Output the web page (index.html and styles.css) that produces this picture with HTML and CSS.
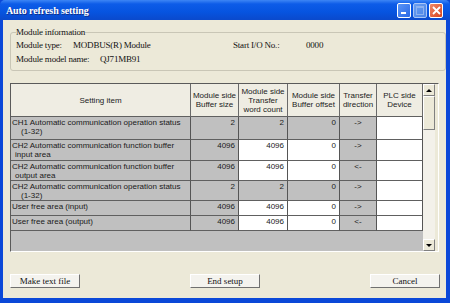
FILE: index.html
```html
<!DOCTYPE html>
<html lang="en">
<head>
    <meta charset="UTF-8">
    <title>Auto refresh setting</title>
    <link rel="stylesheet" href="styles.css">
</head>
<body>
    <div class="window">
        <div class="titlebar">
            <span class="title">Auto refresh setting</span>
            <div class="caption-btns">
                <span class="cbtn min"><span class="bar"></span></span>
                <span class="cbtn max"><span class="box"></span></span>
                <span class="cbtn close">
                    <svg width="9" height="9" viewBox="0 0 9 9"><path d="M1 1 L8 8 M8 1 L1 8" stroke="#fff" stroke-width="1.8"/></svg>
                </span>
            </div>
        </div>
        <div class="frame">
            <fieldset class="group">
                <legend>Module information</legend>
                <div class="info-row">
                    <span class="k1">Module type:</span>
                    <span class="v1">MODBUS(R) Module</span>
                    <span class="k2">Start I/O No.:</span>
                    <span>0000</span>
                </div>
                <div class="info-row">
                    <span class="k3">Module model name:</span>
                    <span>QJ71MB91</span>
                </div>
            </fieldset>

            <div class="grid-box">
                <div class="grid-main">
                    <div class="grid">
                        <div class="hd">Setting item</div>
                        <div class="hd">Module side<br>Buffer size</div>
                        <div class="hd">Module side<br>Transfer<br>word count</div>
                        <div class="hd">Module side<br>Buffer offset</div>
                        <div class="hd">Transfer<br>direction</div>
                        <div class="hd">PLC side<br>Device</div>

                        <div class="c g item">CH1 Automatic communication operation status<span class="l2 in1">(1-32)</span></div>
                        <div class="c g num">2</div>
                        <div class="c g num">2</div>
                        <div class="c g num">0</div>
                        <div class="c g dir">-&gt;</div>
                        <div class="c w"></div>

                        <div class="c g item">CH2 Automatic communication function buffer<span class="l2 in2">input area</span></div>
                        <div class="c g num">4096</div>
                        <div class="c w num">4096</div>
                        <div class="c w num">0</div>
                        <div class="c g dir">-&gt;</div>
                        <div class="c w"></div>

                        <div class="c g item">CH2 Automatic communication function buffer<span class="l2 in2">output area</span></div>
                        <div class="c g num">4096</div>
                        <div class="c w num">4096</div>
                        <div class="c w num">0</div>
                        <div class="c g dir">&lt;-</div>
                        <div class="c w"></div>

                        <div class="c g item">CH2 Automatic communication operation status<span class="l2 in1">(1-32)</span></div>
                        <div class="c g num">2</div>
                        <div class="c g num">2</div>
                        <div class="c g num">0</div>
                        <div class="c g dir">-&gt;</div>
                        <div class="c w"></div>

                        <div class="c g item">User free area (input)</div>
                        <div class="c g num">4096</div>
                        <div class="c w num">4096</div>
                        <div class="c w num">0</div>
                        <div class="c g dir">-&gt;</div>
                        <div class="c w"></div>

                        <div class="c g item">User free area (output)</div>
                        <div class="c g num">4096</div>
                        <div class="c w num">4096</div>
                        <div class="c w num">0</div>
                        <div class="c g dir">&lt;-</div>
                        <div class="c w"></div>
                    </div>
                    <div class="grid-fill"></div>
                </div>
                <div class="vscroll">
                    <div class="sbtn"><span class="tri up"></span></div>
                    <div class="track"><div class="thumb"></div></div>
                    <div class="sbtn"><span class="tri down"></span></div>
                </div>
            </div>

            <div class="buttons">
                <button class="btn">Make text file</button>
                <button class="btn">End setup</button>
                <button class="btn">Cancel</button>
            </div>
        </div>
    </div>
</body>
</html>
```

FILE: styles.css
```css
body {
    margin: 0;
    background: #fff;
}
.window {
    width: 450px;
    height: 303px;
    display: flex;
    flex-direction: column;
    background: #0b48d8;
    font-family: "Liberation Serif", serif;
    color: #111;
}
.titlebar {
    height: 20px;
    display: flex;
    align-items: center;
    padding: 0 7px 0 6px;
    background: linear-gradient(#3d86f5 0%, #0d5ce8 20%, #0654e0 60%, #0a49cc 100%);
    border-radius: 5px 5px 0 0;
}
.title {
    flex: 1;
    color: #fff;
    font-weight: bold;
    font-size: 10px;
    letter-spacing: -0.1px;
    text-shadow: 1px 1px #10308c;
}
.caption-btns {
    display: flex;
    gap: 2px;
    margin-top: 1px;
}
.cbtn {
    width: 14px;
    height: 15px;
    box-sizing: border-box;
    border: 1px solid #fff;
    border-radius: 2px;
    position: relative;
    display: flex;
    align-items: center;
    justify-content: center;
}
.cbtn.min {
    background: linear-gradient(135deg, #5a95f7, #2a68e6);
}
.cbtn.min .bar {
    position: absolute;
    left: 3px;
    bottom: 3px;
    width: 5px;
    height: 2px;
    background: #fff;
}
.cbtn.max {
    background: linear-gradient(135deg, #6a9ff2, #4b84e6);
    border-color: #a9c6f6;
}
.cbtn.max .box {
    width: 6px;
    height: 6px;
    border: 1px solid #8db2ef;
    border-top-width: 2px;
}
.cbtn.close {
    background: linear-gradient(135deg, #f08a6a, #d7441d);
}
.frame {
    flex: 1;
    margin: 0 4px 5px 3px;
    padding: 7px 0 0 7px;
    background: #ece9d8;
    display: flex;
    flex-direction: column;
}
.group {
    margin: 0;
    padding: 1px 5px 4px;
    border: 1px solid #c9c6b6;
    border-radius: 3px;
    font-size: 9px;
    letter-spacing: -0.2px;
}
.group legend {
    padding: 0;
    line-height: 10px;
}
.info-row {
    display: flex;
    line-height: 14px;
}
.k1 {
    width: 57px;
}
.v1 {
    width: 160px;
}
.k2 {
    width: 73px;
}
.k3 {
    width: 84px;
}
.grid-box {
    margin-top: 12px;
    margin-right: 7px;
    height: 169px;
    box-sizing: border-box;
    border: 1px solid;
    border-color: #5a5a5a #ffffff #ffffff #5a5a5a;
    display: flex;
    font-family: "Liberation Sans", Arial, sans-serif;
    font-size: 8px;
}
.grid-main {
    display: flex;
    flex-direction: column;
    background: #c0c0c0;
}
.grid {
    display: grid;
    grid-template-columns: 180px 48px 49px 52px 37px 46px;
    grid-template-rows: 33px 23px 21px 20px 20px 15px 15px;
}
.hd {
    background: #efede3;
    border-right: 1px solid #6a6a6a;
    border-bottom: 1px solid #606060;
    display: flex;
    align-items: center;
    justify-content: center;
    text-align: center;
    line-height: 9px;
    color: #222;
}
.c {
    box-sizing: border-box;
    border-right: 1px solid #555;
    border-bottom: 1px solid #606060;
    padding: 1px 2px 0;
    line-height: 9px;
    color: #1a1a1a;
    white-space: nowrap;
}
.g {
    background: #c0c0c0;
}
.w {
    background: #fff;
}
.item {
    padding-left: 1px;
}
.l2 {
    display: block;
}
.in1 {
    padding-left: 9px;
}
.in2 {
    padding-left: 3px;
}
.num {
    text-align: right;
    padding-right: 3px;
}
.dir {
    text-align: center;
}
.grid-fill {
    flex: 1;
    background: #c0c0c0;
}
.vscroll {
    width: 12px;
    display: flex;
    flex-direction: column;
    background: #f3f1ea;
}
.sbtn {
    height: 12px;
    box-sizing: border-box;
    background: #ece9d8;
    border: 1px solid;
    border-color: #fff #808080 #808080 #fff;
    display: flex;
    align-items: center;
    justify-content: center;
}
.tri {
    width: 0;
    height: 0;
    border-left: 3px solid transparent;
    border-right: 3px solid transparent;
}
.tri.up {
    border-bottom: 3px solid #000;
}
.tri.down {
    border-top: 3px solid #000;
}
.track {
    flex: 1;
    display: flex;
    flex-direction: column;
}
.thumb {
    height: 34px;
    box-sizing: border-box;
    background: #ece9d8;
    border: 1px solid;
    border-color: #fff #808080 #808080 #fff;
}
.buttons {
    margin-top: 22px;
    margin-right: 6px;
    display: flex;
    justify-content: space-between;
}
.btn {
    width: 70px;
    height: 14px;
    padding: 0;
    box-sizing: border-box;
    background: #f4f3ee;
    border: 1px solid;
    border-color: #fff #707070 #707070 #fff;
    font-family: "Liberation Serif", serif;
    font-size: 9px;
    line-height: 12px;
    color: #111;
}
```
